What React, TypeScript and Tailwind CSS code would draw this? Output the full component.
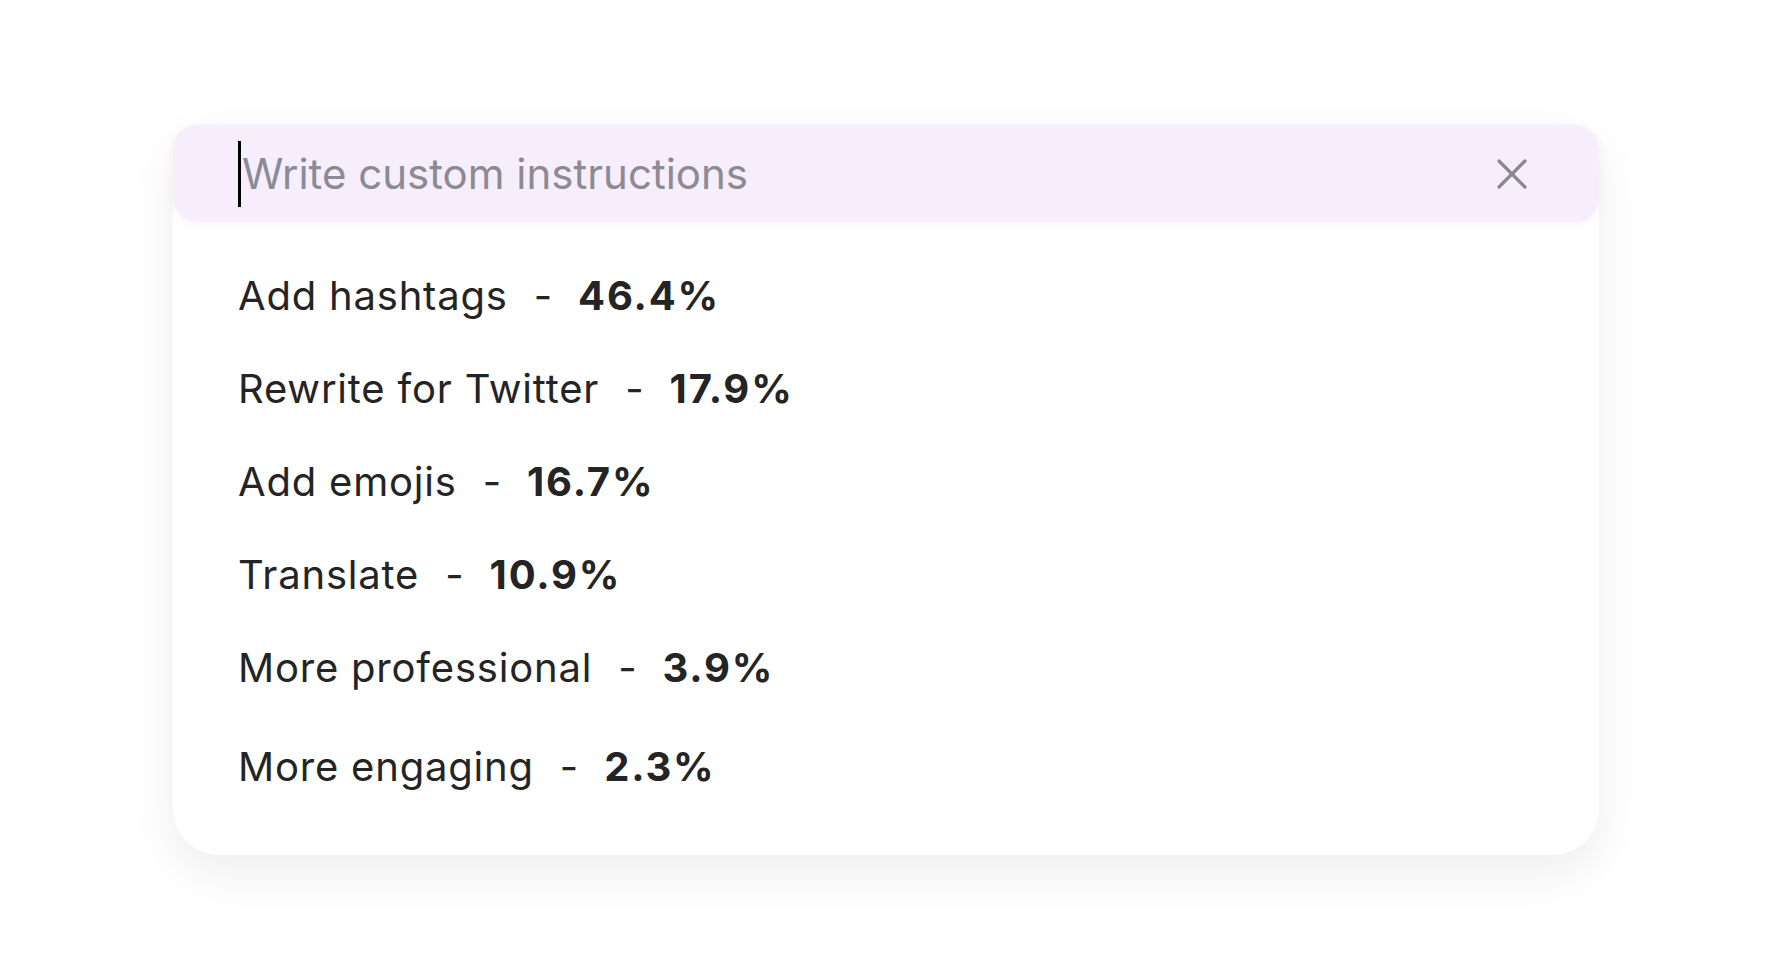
import React from 'react';

const suggestions = [
  { label: 'Add hashtags', share: '46.4%' },
  { label: 'Rewrite for Twitter', share: '17.9%' },
  { label: 'Add emojis', share: '16.7%' },
  { label: 'Translate', share: '10.9%' },
  { label: 'More professional', share: '3.9%' },
  { label: 'More engaging', share: '2.3%' },
];

const CloseIcon: React.FC = () => (
  <svg width="30" height="30" viewBox="0 0 30 30" fill="none">
    <path d="M2 2L28 28M28 2L2 28" stroke="#8b8692" strokeWidth="3.2" strokeLinecap="round" />
  </svg>
);

export default function App() {
  return (
    <div className="min-h-screen bg-white pt-[125px] pl-[173px] font-['Inter',sans-serif]">
      <div className="w-[1426px] rounded-[46px] rounded-t-[24px] bg-white shadow-[0_18px_48px_rgba(0,0,0,0.07)]">
        {/* input bar */}
        <div className="flex h-[97px] items-center justify-between rounded-[24px] bg-[#f7eefd] pl-[65px] pr-[72px] shadow-[0_3px_8px_rgba(120,90,150,0.06)]">
          <div className="flex items-center">
            <span className="h-[66px] w-[3px] bg-black" />
            <span className="ml-px text-[42px] leading-none text-[#8c8a94]">Write custom instructions</span>
          </div>
          <button className="flex items-center justify-center">
            <CloseIcon />
          </button>
        </div>

        {/* suggestions */}
        <div className="flex flex-col gap-[45px] pt-[50px] pb-[64px] pl-[65px]">
          {suggestions.map((s, i) => (
            <div
              key={s.label}
              className={`flex items-center text-[40px] leading-[48px] text-[#242424] ${i === suggestions.length - 1 ? 'mt-[6px]' : ''}`}
            >
              <span className="tracking-[0.8px]">{s.label}</span>
              <span className="mx-[26px]">-</span>
              <span className="font-bold tracking-[1.8px]">{s.share}</span>
            </div>
          ))}
        </div>
      </div>
    </div>
  );
}
